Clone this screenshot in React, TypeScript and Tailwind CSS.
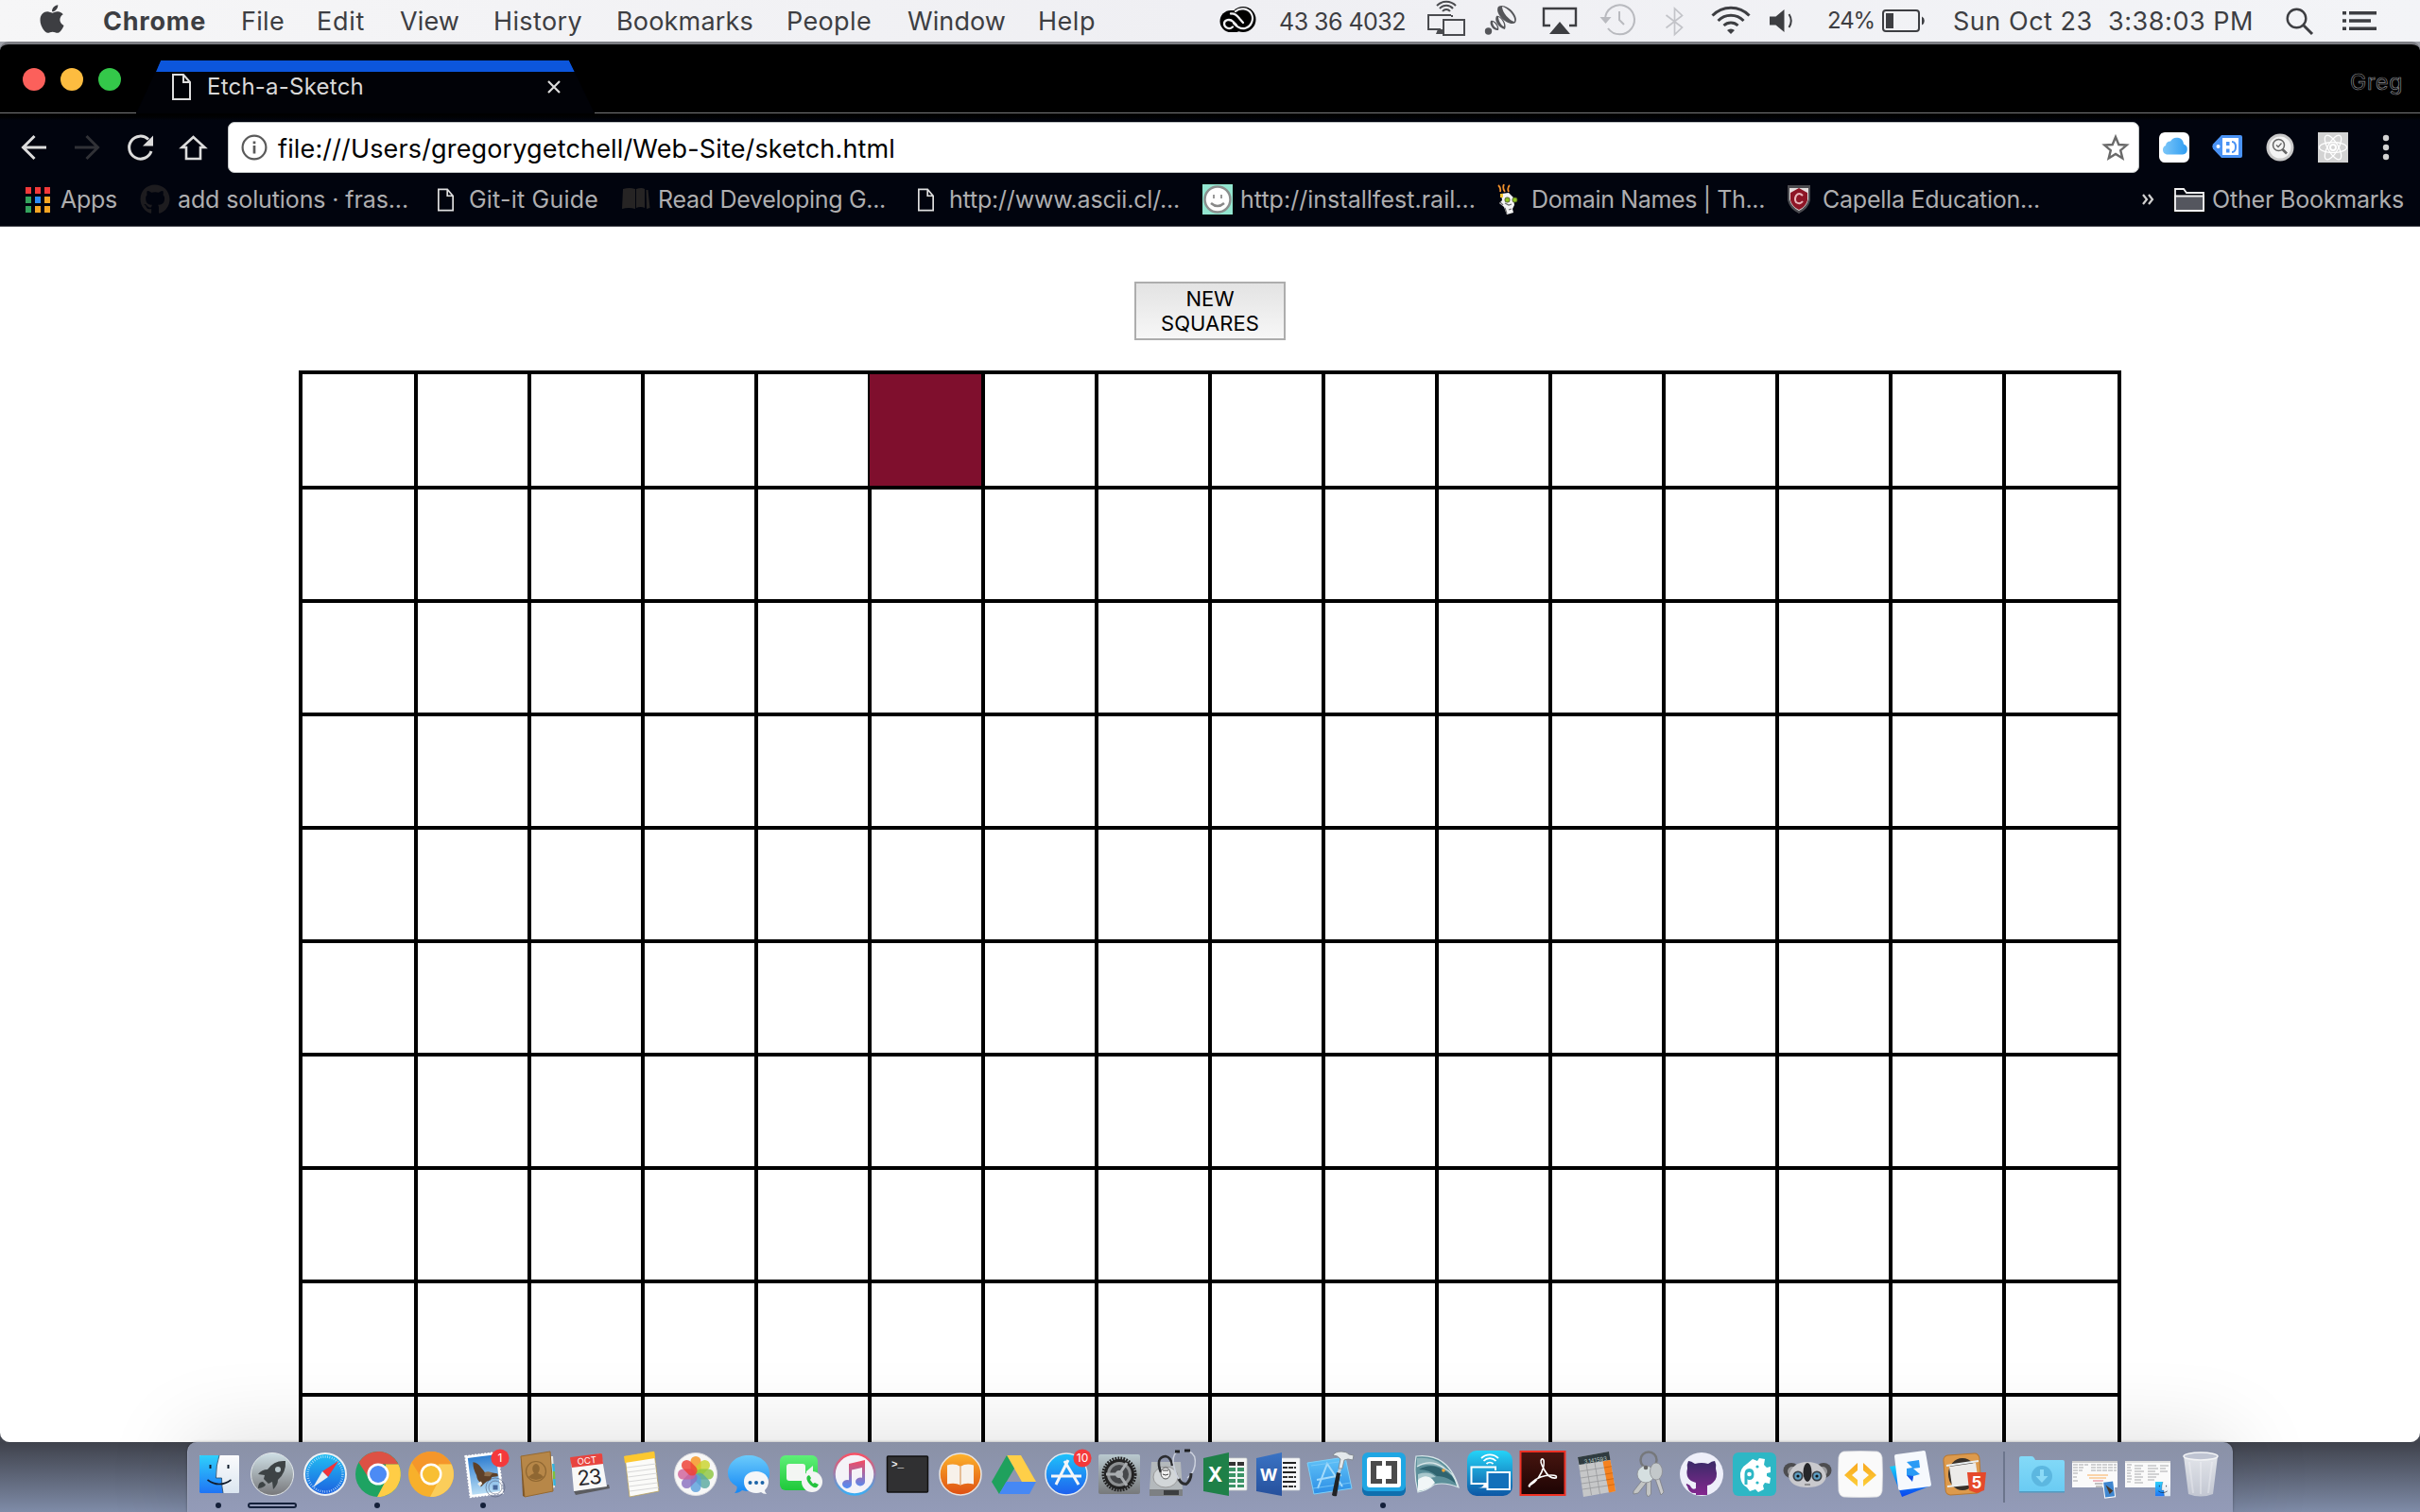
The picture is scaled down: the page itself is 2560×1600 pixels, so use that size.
import { useLayoutEffect, useRef, type ReactNode } from "react";
import { FaApple, FaGithub } from "react-icons/fa";

/** Single line of text whose letter spacing is tuned so it fills exactly `w` pixels. */
function Fit({ w, className = "", children }: { w: number; className?: string; children: string }) {
  const ref = useRef<HTMLSpanElement>(null);
  useLayoutEffect(() => {
    const el = ref.current;
    if (!el) return;
    el.style.letterSpacing = "0px";
    const natural = el.getBoundingClientRect().width;
    el.style.letterSpacing = `${(w - natural) / children.length}px`;
  }, [w, children]);
  return (
    <span ref={ref} className={`inline-block whitespace-pre ${className}`}>
      {children}
    </span>
  );
}

/* ---------- menu bar ---------- */

const menus = [
  { label: "Chrome", w: 109, slot: "w-[147px] pl-[1px] font-bold" },
  { label: "File", w: 46, slot: "w-[80px]" },
  { label: "Edit", w: 51, slot: "w-[88px]" },
  { label: "View", w: 63, slot: "w-[99px]" },
  { label: "History", w: 94, slot: "w-[130px]" },
  { label: "Bookmarks", w: 145, slot: "w-[180px]" },
  { label: "People", w: 90, slot: "w-[128px]" },
  { label: "Window", w: 104, slot: "w-[138px]" },
  { label: "Help", w: 61, slot: "w-[100px]" },
];

function MenuBar() {
  return (
    <div className="flex h-[44px] shrink-0 items-center bg-gradient-to-r from-[#f6f6f7] via-[#efeff3] to-[#f3f4f7] text-[27px] leading-none text-[#3d3e42]">
      <div className="flex w-[108px] shrink-0 pl-[40px] pb-[4px]">
        <FaApple className="h-[34px] w-[30px]" />
      </div>
      {menus.map((m) => (
        <div key={m.label} className={`shrink-0 ${m.slot}`}>
          <Fit w={m.w}>{m.label}</Fit>
        </div>
      ))}
      <div className="w-[91px] shrink-0" />
      <svg className="h-[44px] w-[64px] shrink-0" viewBox="0 0 64 44">
        <rect x="1.500" y="11" width="27" height="23" rx="11.500" fill="#000" />
        <circle cx="26" cy="20.500" r="13.500" fill="#000" />
        <g fill="none" stroke="#f1f1f4" strokeLinecap="round">
          <path d="M19 26.500 L15.500 23 C12 19.500 6 21 6 25 C6 29 11 32 15 28.500" strokeWidth="2.300" />
          <path d="M13 14.500 C18 14 20 17 22.500 20 L26 24" strokeWidth="2.300" />
          <path d="M18 12 C23 7.500 31 9 34.500 14 C38 20 35 28 28 30 C23 31 19.500 28.500 16 24.500" strokeWidth="2.200" />
        </g>
      </svg>
      <div className="w-[155px] shrink-0 pt-[2px] text-[25px]">
        <Fit w={134}>43 36 4032</Fit>
      </div>
      <svg className="h-[44px] w-[290px] shrink-0" viewBox="1508 0 290 44" fill="none" stroke="#4a4b4f" strokeWidth="2">
        <path d="M1535 16H1511V31H1524" />
        <path d="M1519 36h7v-5h-5z" fill="#4a4b4f" stroke="none" />
        <path d="M1536 18V16" />
        <rect x="1527" y="21" width="22" height="16" />
        <path d="M1526 11a5 5 0 0 1 8 0M1523 8a9 9 0 0 1 14 0M1520 5a14 14 0 0 1 20 0" transform="translate(0 1)" />
        <g fill="#55565a" stroke="none">
          <circle cx="1574.500" cy="33" r="3.700" />
          <path fillRule="evenodd" d="M1577 22c3-2 10 5 8 10c-5 1-10-6-8-10zm2 1c0 4 3 7 5 7c0-3-3-6-5-7z" />
          <path fillRule="evenodd" d="M1583 17c4-2 12 8 9 14c-6-1-12-9-9-14zm2 1c0 4 4 10 6 10c1-3-3-9-6-10z" />
          <path fillRule="evenodd" d="M1585 7c8-5 23 10 18 17c-6 5-23-9-18-17zm4 0c0 6 8 15 13 16c2-5-7-15-13-16z" />
        </g>
        <path d="M1640 27h-7V9h34v18h-7" strokeWidth="2.400" stroke="#3d3e42" />
        <path d="M1639 36h22l-11-13z" fill="#3d3e42" stroke="none" />
        <g stroke="#b9babf" strokeWidth="2">
          <path d="M1698 20a15.500 15.500 0 1 1 3 10" />
          <path d="M1713 12v9l5 5" />
          <path d="M1692.500 18h12l-6 7z" fill="#b9babf" stroke="none" />
        </g>
        <path d="M1762.500 16l17 13-8 7.500V9l8 7.500-17 13" stroke="#c3c4c9" strokeWidth="1.700" />
      </svg>
      <svg className="h-[44px] w-[134px] shrink-0" viewBox="1798 0 134 44" fill="none" stroke="#3d3e42">
        <path d="M1811.500 16.500a27 27 0 0 1 39 0M1817.500 22a19 19 0 0 1 27 0M1823.500 27a11 11 0 0 1 15 0" strokeWidth="3" />
        <path d="M1831 36l-4-4a6 6 0 0 1 8 0z" fill="#3d3e42" stroke="none" />
        <path d="M1872 17.500h6.500l9-7.500v24l-9-7.500H1872z" fill="#3d3e42" stroke="none" />
        <path d="M1892.500 15q4.500 7 0 14" strokeWidth="2" />
      </svg>
      <div className="w-[58px] shrink-0 pl-px text-[24px]">
        <Fit w={50}>24%</Fit>
      </div>
      <svg className="h-[44px] w-[74px] shrink-0" viewBox="1990 0 74 44">
        <rect x="1992" y="11" width="38" height="22" rx="3" fill="none" stroke="#3d3e42" strokeWidth="2" />
        <rect x="1995" y="14" width="8" height="16" fill="#3d3e42" />
        <path d="M2033 17.500a5 5 0 0 1 0 9z" fill="#3d3e42" />
      </svg>
      <div className="w-[352px] shrink-0 pl-[2px]">
        <Fit w={318}>{"Sun Oct 23  3:38:03 PM"}</Fit>
      </div>
      <svg className="h-[44px] w-[144px] shrink-0" viewBox="2416 0 144 44" fill="none" stroke="#3d3e42">
        <circle cx="2429.500" cy="19.500" r="9.800" strokeWidth="2.400" />
        <path d="M2436.500 26.500l9.500 9.500" strokeWidth="3" />
        <path d="M2478 13.700h4M2485 13.700h29M2478 22h4M2485 22h23M2478 30.300h4M2485 30.300h29" strokeWidth="3.500" />
      </svg>
    </div>
  );
}

/* ---------- browser chrome ---------- */

function DocIcon({ className }: { className: string }) {
  return (
    <svg className={className} viewBox="0 0 20 28" fill="none" stroke="#dedede" strokeWidth="2">
      <path d="M1 1h11l7 8v18H1zM12 1v8h7" />
    </svg>
  );
}

function TabStrip() {
  return (
    <div className="flex h-[73px] shrink-0 items-end">
      <div className="flex h-full w-[144px] shrink-0 items-center gap-[16px] border-b border-[#77787a] pl-[24px] pt-[2px]">
        <div className="size-[24px] rounded-full bg-[#fc605b]" />
        <div className="size-[24px] rounded-full bg-[#fdbc40]" />
        <div className="size-[24px] rounded-full bg-[#34c84a]" />
      </div>
      <div className="h-[56px] w-[485px] shrink-0 bg-[#010207] [clip-path:polygon(26px_0,458px_0,485px_100%,0_100%)]">
        <div className="h-[12px] bg-[#0c56dc] [clip-path:polygon(26px_0,458px_0,464px_100%,21px_100%)]" />
        <div className="flex h-[32px] items-center pl-[38px]">
          <DocIcon className="h-[28px] w-[20px]" />
          <div className="ml-[17px] w-[360px] pb-px text-[24px] leading-none text-[#d9d9d9]">
            <Fit w={166}>Etch-a-Sketch</Fit>
          </div>
          <svg className="size-[14px]" viewBox="0 0 14 14" stroke="#dcdcdc" strokeWidth="2.200">
            <path d="M1 1l12 12M13 1L1 13" />
          </svg>
        </div>
      </div>
      <div className="flex h-full flex-1 items-center justify-end border-b border-[#77787a] pr-[18px] pt-[8px]">
        <span className="text-[23px] leading-none text-black [-webkit-text-stroke:0.7px_#8a8b90]">
          <Fit w={56}>Greg</Fit>
        </span>
      </div>
    </div>
  );
}

function Toolbar() {
  return (
    <div className="flex h-[72px] shrink-0 items-center">
      <svg className="h-[72px] w-[241px] shrink-0" viewBox="0 120 241 72" fill="none" stroke="#dcdcdc" strokeWidth="3">
        <path d="M49 156H25M36.500 144L24.500 156l12 12" />
        <path d="M79 156h24M91.500 144l12 12-12 12" stroke="#303136" />
        <path d="M157 147.500A12 12 0 1 0 160 160" />
        <path d="M162 143.500v11h-11z" fill="#dcdcdc" stroke="none" />
        <path d="M197 156v12h15v-12h4.500L204.500 145 192.500 156z" strokeWidth="2.600" />
      </svg>
      <div className="flex h-[54px] w-[2022px] shrink-0 items-center rounded-[7px] border border-[#bfc4c4] bg-white pl-[13px]">
        <svg className="size-[28px] shrink-0" viewBox="0 0 28 28" fill="none" stroke="#5a5a5a" strokeWidth="2.200">
          <circle cx="14" cy="14" r="12.400" />
          <path d="M14 12v8.500M14 7.500v2.700" strokeWidth="2.700" />
        </svg>
        <div className="ml-[11px] flex-1 pt-[2px] text-[27px] leading-none text-black">
          <Fit w={653}>file:///Users/gregorygetchell/Web-Site/sketch.html</Fit>
        </div>
        <svg className="mr-[9px] size-[30px] shrink-0" viewBox="0 0 30 30" fill="none" stroke="#6a6a6a" strokeWidth="2.400">
          <path d="M15 4l3.300 8 8.400.6-6.500 5.500 2.100 8.400L15 22l-7.300 4.500 2.100-8.400-6.500-5.500 8.400-.6z" />
        </svg>
      </div>
      <svg className="h-[72px] w-[297px] shrink-0" viewBox="2263 120 297 72" fill="none">
        <defs>
          <linearGradient id="cloud" x1="0" y1="0" x2="1" y2="0">
            <stop offset="0" stopColor="#7cc6f8" />
            <stop offset="1" stopColor="#2f9df2" />
          </linearGradient>
        </defs>
        <rect x="2284" y="140" width="32" height="32" rx="6" fill="#fff" />
        <path d="M2292 163.500a5 5 0 0 1-1-9.500a5 5 0 0 1 5-4.500a7.500 7.500 0 0 1 14 3a5.700 5.700 0 0 1-1 11z" fill="url(#cloud)" />
        <path d="M2350 143h20q2 0 2 2v20q0 2-2 2h-20l-9-9.500q-1.500-2.500 0-5z" fill="#4a93f5" />
        <circle cx="2346.500" cy="155" r="2" fill="#fff" />
        <rect x="2351" y="146" width="17" height="18" fill="#fff" />
        <path d="M2355 150h3.500v4h-3.500zM2355 157.500h3.500v4h-3.500z" fill="#4a93f5" />
        <path d="M2361 150q4 0 4 5.500t-4 5.500" stroke="#4a93f5" strokeWidth="2" />
        <circle cx="2412" cy="156" r="14.500" fill="#c9c9c9" />
        <circle cx="2412" cy="156" r="11.500" fill="#f4f4f4" />
        <circle cx="2410.500" cy="153.500" r="6" stroke="#666" strokeWidth="1.500" />
        <path d="M2414.500 158l4.500 4.500" stroke="#666" strokeWidth="2.700" />
        <path d="M2408 153.500l2 2 3.500-4" stroke="#666" strokeWidth="1.200" />
        <rect x="2452" y="140" width="32" height="32" fill="#d3d3d3" />
        <g stroke="#fff" strokeWidth="1.300">
          <ellipse cx="2468" cy="156" rx="14.500" ry="5.500" />
          <ellipse cx="2468" cy="156" rx="14.500" ry="5.500" transform="rotate(60 2468 156)" />
          <ellipse cx="2468" cy="156" rx="14.500" ry="5.500" transform="rotate(120 2468 156)" />
          <circle cx="2468" cy="156" r="3" fill="#d3d3d3" strokeWidth="2" />
        </g>
        <g fill="#d2d2d2">
          <circle cx="2524" cy="146" r="3.200" />
          <circle cx="2524" cy="156" r="3.200" />
          <circle cx="2524" cy="166" r="3.200" />
        </g>
      </svg>
    </div>
  );
}

function AppsIcon() {
  return (
    <div className="grid grid-cols-[6px_6px_6px] grid-rows-[7px_7px_7px] gap-x-[4px] gap-y-[3px]">
      <i className="bg-[#f2393a]" /><i className="bg-[#f2393a]" /><i className="bg-[#f2393a]" />
      <i className="bg-[#34a35d]" /><i className="bg-[#2c8cf4]" /><i className="bg-[#f5a623]" />
      <i className="bg-[#34a35d]" /><i className="bg-[#f5a623]" /><i className="bg-[#f5a623]" />
    </div>
  );
}

function BookIcon() {
  return (
    <svg className="h-[24px] w-[32px]" viewBox="0 0 32 24" fill="#262424">
      <path d="M3 1q7-2 13 0v21q-7-2-14 0zM17 1q6-2 9 0v20q-4-2-9 0zM27.500 2h2l2 19-3.500 1z" />
    </svg>
  );
}

function SmileyIcon() {
  return (
    <svg className="size-[32px]" viewBox="0 0 32 32">
      <rect width="32" height="32" fill="#93e6d0" />
      <circle cx="16" cy="16" r="13.500" fill="#fff" stroke="#8b8f8e" strokeWidth="2.500" />
      <path d="M12 11v4M20 11v4" stroke="#999" strokeWidth="2" />
      <path d="M9 20q7 6 14 0" fill="none" stroke="#888" strokeWidth="2.500" />
    </svg>
  );
}

function MascotIcon() {
  return (
    <svg className="h-[32px] w-[22px]" viewBox="0 0 22 32" fill="none">
      <path d="M3 8Q4 4 1 1M8 8Q5 4 7 0M12 8Q10 4 13 1" stroke="#f0902c" strokeWidth="1.800" />
      <path d="M4 10l8-1 5 5 1 8-2 4 1 4-7 2-3-8-5-4 3-3z" fill="#f3f3f3" />
      <path d="M3 19l3 3M8 20l4 2 3-1M8 25l2 6M12 27l3-1" stroke="#666" strokeWidth="1.200" />
      <rect x="8" y="14" width="5" height="5" rx="2" fill="#8fc31f" stroke="#3f4a20" strokeWidth=".8" />
      <rect x="16" y="14" width="5" height="5" rx="2" fill="#8fc31f" stroke="#3f4a20" strokeWidth=".8" />
      <rect x="3" y="10" width="3" height="4" fill="#f0c22c" />
    </svg>
  );
}

function ShieldIcon() {
  return (
    <svg className="h-[32px] w-[26px]" viewBox="0 0 26 32">
      <path d="M1 1h24v16q-2 9-12 14Q3 26 1 17z" fill="#4b4b50" />
      <path d="M3 4h20v12q-2 8-10 12Q5 24 3 16z" fill="#e4dede" />
      <path d="M4 9l9-5 9 5v8q-2 7-9 10-7-3-9-10z" fill="#8e1526" />
      <path d="M17 12q-4-4-7 0-2 4 0 7 4 3 7-1" fill="none" stroke="#e9b7bc" strokeWidth="2" />
    </svg>
  );
}

const bookmarks: { label: string; w: number; icon: ReactNode; lead: string; slot: string }[] = [
  { label: "Apps", w: 60, icon: <AppsIcon />, lead: "w-[64px] pl-[27px]", slot: "w-[148px]" },
  { label: "add solutions · fras...", w: 244, icon: <FaGithub className="size-[32px] text-[#1d1c1f]" />, lead: "w-[40px]", slot: "w-[315px]" },
  { label: "Git-it Guide", w: 137, icon: <DocIcon className="h-[25px] w-[17px]" />, lead: "w-[33px]", slot: "w-[193px]" },
  { label: "Read Developing G...", w: 241, icon: <BookIcon />, lead: "w-[40px]", slot: "w-[315px]" },
  { label: "http://www.ascii.cl/...", w: 244, icon: <DocIcon className="h-[25px] w-[17px]" />, lead: "w-[33px]", slot: "w-[301px]" },
  { label: "http://installfest.rail...", w: 249, icon: <SmileyIcon />, lead: "w-[40px]", slot: "w-[312px]" },
  { label: "Domain Names | Th...", w: 247, icon: <MascotIcon />, lead: "w-[36px]", slot: "w-[306px]" },
  { label: "Capella Education...", w: 230, icon: <ShieldIcon />, lead: "w-[38px]", slot: "w-[376px]" },
];

function BookmarksBar() {
  return (
    <div className="flex h-[48px] shrink-0 items-center border-b border-[#4a4b52] pb-[9px] text-[25px] leading-none text-[#aeaeb0]">
      {bookmarks.map((b) => (
        <div key={b.label} className={`flex shrink-0 items-center ${b.slot}`}>
          <div className={`shrink-0 ${b.lead}`}>{b.icon}</div>
          <Fit w={b.w}>{b.label}</Fit>
        </div>
      ))}
      <svg className="h-[12px] w-[34px] shrink-0" viewBox="0 0 34 12" fill="none" stroke="#d0d0d0" strokeWidth="2.200">
        <path d="M1 1l4 5-4 5M7 1l4 5-4 5" />
      </svg>
      <svg className="h-[25px] w-[40px] shrink-0" viewBox="0 0 40 25" stroke="#f2f2f2" strokeWidth="1.800">
        <path d="M1 23V1h9l3 4h18v18q0 1-1 1H2q-1 0-1-1z" fill="#05070f" />
        <path d="M1 8.500h30V24H1z" fill="#54565e" />
      </svg>
      <Fit w={203}>Other Bookmarks</Fit>
    </div>
  );
}

/* ---------- page ---------- */

function Board() {
  return (
    <div className="grid w-[1928px] grid-cols-[122px_repeat(14,120px)_122px] grid-rows-[122px_repeat(9,120px)] border-l-4 border-t-4 border-black">
      {Array.from({ length: 160 }, (_, i) =>
        i === 5 ? (
          <div key={i} className="-ml-[2px] border-b-4 border-r-4 border-black bg-[#7f0f2d]" />
        ) : (
          <div key={i} className="border-b-4 border-r-4 border-black" />
        ),
      )}
    </div>
  );
}

function Page() {
  return (
    <div className="flex h-[1286px] flex-col items-center overflow-hidden rounded-b-[10px] bg-white pt-[58px]">
      <button className="mb-[32px] flex h-[62px] w-[160px] shrink-0 flex-col items-center justify-center border-2 border-[#adadad] bg-gradient-to-b from-[#e3e3e3] to-[#f7f7f7] text-[22px] leading-[26px] text-black">
        <Fit w={51}>NEW</Fit>
        <Fit w={104}>SQUARES</Fit>
      </button>
      <Board />
    </div>
  );
}

/* ---------- dock ---------- */

function Ico({ children }: { children: ReactNode }) {
  return (
    <svg className="size-[56px] overflow-visible" viewBox="0 0 56 56" fill="none" fontFamily="Inter, sans-serif">
      {children}
    </svg>
  );
}

function Grads() {
  const g: [string, string, string][] = [
    ["gFinder", "#2fd0fb", "#1f74f5"], ["gWhite", "#fbfbfd", "#dbe6f0"], ["gRocket", "#cfe0e6", "#77777a"],
    ["gSafari", "#22c0f2", "#1c5fe0"], ["gMail", "#2f7ed0", "#b8ddf5"], ["gMsg", "#6bcbfb", "#1487f5"],
    ["gFace", "#5ef078", "#1fc83a"], ["gTunes", "#fb5064", "#39aef5"], ["gNote", "#f5495f", "#4f8df7"],
    ["gBooks", "#fdb32c", "#de4f12"], ["gStore", "#1fc3fa", "#1e5fee"], ["gPref", "#b9c9cf", "#77797b"],
    ["gX", "#62c4f8", "#2c8ee6"], ["gScreens", "#25d3f7", "#0d57a5"], ["gAcro", "#47150f", "#1d0404"],
    ["gGit", "#3a2a68", "#84288f"], ["gCode", "#f9a71d", "#fccf3b"], ["gFolder", "#84daf8", "#6acbf3"],
    ["gFr", "#17e0fb", "#0a43f0"], ["gWord", "#3a73c4", "#26509c"], ["gTrash", "#e8eaee", "#c6cad4"],
  ];
  return (
    <svg className="absolute size-0">
      <defs>
        {g.map(([id, a, b]) => (
          <linearGradient key={id} id={id} x1="0" y1="0" x2="0" y2="1">
            <stop offset="0" stopColor={a} />
            <stop offset="1" stopColor={b} />
          </linearGradient>
        ))}
      </defs>
    </svg>
  );
}

function FinderArt() {
  return (
    <>
      <rect x="7" y="8" width="42" height="40" rx="1" fill="url(#gWhite)" />
      <path d="M28 8H8q-1 0-1 1v38q0 1 1 1h24q-1.500-7-1.500-16H24.500Q24.500 18 28 8z" fill="url(#gFinder)" />
      <path d="M28 8q-3.500 10-3.500 24h6q0 9 1.500 16" stroke="#27455f" strokeWidth=".8" />
      <path d="M18.500 18v4M37.500 18v4" stroke="#111c2c" strokeWidth="2" />
      <path d="M15.500 34q12.500 9 25 0" stroke="#111c2c" strokeWidth="1.600" />
    </>
  );
}

function ChromeArt({ a, b, c, mid }: { a: string; b: string; c: string; mid: string }) {
  return (
    <>
      <circle cx="28" cy="28" r="24" fill={b} />
      <path d="M7.500 15.500A24 24 0 0 1 49.500 17.500H28L18 32z" fill={a} />
      <path d="M49.500 17.500A24 24 0 0 1 27 52L37 33 36 17.500z" fill={c} />
      <circle cx="28" cy="28" r="11.500" fill="#fff" />
      <circle cx="28" cy="28" r="9" fill={mid} />
    </>
  );
}

function Badge({ n, x, y }: { n: string; x: number; y: number }) {
  return (
    <>
      <circle cx={x} cy={y} r="9.600" fill="#f5393b" />
      <text x={x} y={y + 4.300} textAnchor="middle" fontSize="12" fill="#fff">{n}</text>
    </>
  );
}

function ScreensArt() {
  return (
    <>
      <path d="M31 38H8.500V20.500H34V24" stroke="#fff" strokeWidth="2" />
      <path d="M15 42.500q6 0 7-4.500h5v4.500z" fill="#fff" />
      <rect x="25.500" y="26" width="23.500" height="18" fill="#1270ba" stroke="#fff" strokeWidth="2" />
      <path d="M24.500 17a5 5 0 0 1 7 0M21.500 14a9 9 0 0 1 13 0M19 11a13 13 0 0 1 18 0" stroke="#fff" strokeWidth="1.800" />
    </>
  );
}

const petals = ["#f7931e", "#c9d32c", "#8cc63f", "#5aa9a0", "#5aa0dc", "#8a6fc0", "#d0609a", "#ee4035"];

const dockIcons: ReactNode[] = [
  <FinderArt />,
  <>
    <circle cx="28" cy="28" r="22.500" fill="url(#gRocket)" stroke="#e3e8ea" strokeWidth="1" />
    <path d="M42 14q-12-1-19 9-6 0-10 5l7 1-1 4 5 5 4-2 1 8q5-5 5-10 9-8 8-20z" fill="#3d4345" />
    <path d="M18 36q-5 0-5 7 7-1 8-4z" fill="#3d4345" />
    <circle cx="34" cy="23" r="3" fill="#b9c8cd" />
  </>,
  <>
    <circle cx="28" cy="28" r="22" fill="url(#gSafari)" stroke="#eef2f5" strokeWidth="2" />
    <circle cx="28" cy="28" r="18.500" stroke="#d6ecfb" strokeWidth="2.500" strokeDasharray=".8 1.600" opacity=".8" />
    <path d="M42 14L25 25l6 6z" fill="#f0323a" />
    <path d="M15 42L25 25l6 6z" fill="#e9edf0" />
  </>,
  <ChromeArt a="#dd5144" b="#1ea362" c="#ffcd46" mid="#4c8bf5" />,
  <ChromeArt a="#f5962a" b="#f7b02b" c="#fbcd5a" mid="#f8bf33" />,
  <>
    <g transform="rotate(-7 28 28)">
      <rect x="10.500" y="6.500" width="35" height="44" fill="#fff" stroke="#fff" strokeWidth="1.500" strokeDasharray="2 1.400" />
      <rect x="13" y="9" width="30" height="39" fill="url(#gMail)" />
      <path d="M18 14q5 1 8 7 2 3 3 5l6 1 7 2q1 2 0 3l-6 0-2 3-4 1-3 2-4 3 0-5q-3-2-3-8-3-7-2-14z" fill="#5d4028" />
      <path d="M29 26q5-1 8 2l-3 3-6-1z" fill="#8a6b4a" />
      <path d="M20 37l4-2 1 3-3 2z" fill="#f0ece4" />
    </g>
    <g stroke="#56607a" opacity=".6">
      <circle cx="40" cy="42" r="10" strokeWidth="1" />
      <circle cx="40" cy="42" r="7" strokeWidth="1" />
    </g>
    <rect x="37.500" y="39.500" width="5" height="5" fill="#2f4f86" opacity=".8" />
    <Badge n="1" x={45} y={11} />
  </>,
  <>
    <path d="M42 9l3 0 2 33-3 1z" fill="#e9e9e4" />
    <path d="M44 17h2.500l.6 8h-2.500zM45 33h2.500l.4 7h-2.500z" fill="#35b5dd" />
    <path d="M44.500 25H47l.4 8H45z" fill="#7bc13c" />
    <path d="M11 9l31-5 3 42-30 6z" fill="#b78748" stroke="#96692f" strokeWidth="1" />
    <path d="M11 9l4 43-2-1z" fill="#7e5627" />
    <circle cx="27" cy="25" r="10.500" stroke="#8f6732" strokeWidth="1.200" />
    <path d="M19 31q3-3 6-4-3-4-1-8 3-4 6 0 2 4-1 8 4 1 6 4-8 6-16 0z" fill="#8f6732" />
  </>,
  <>
    <path d="M11 46l37-7 1 4-36 7z" fill="#5b5c60" />
    <path d="M8 12l32-6 6 35-35 5z" fill="#f8f8f8" />
    <path d="M7 11q0-1 1-1l31-4q2 0 2 1l1 10-33 4z" fill="#e8443f" />
    <text x="25" y="17" transform="rotate(-6 25 15)" textAnchor="middle" fontSize="9.500" fill="#fff">OCT</text>
    <text x="27" y="39" transform="rotate(-6 27 30)" textAnchor="middle" fontSize="22" letterSpacing="-1" fill="#26262a">23</text>
  </>,
  <>
    <path d="M9 9l31-5 5 42-31 6z" fill="#fbfbf9" stroke="#b9a25c" strokeWidth=".8" />
    <path d="M8 9l32-5 1 7-32 5z" fill="#fdc82f" />
    <path d="M11 21l31-4M11 26l31-4M12 31l31-4M12 36l31-4M13 41l31-4M14 46l31-4" stroke="#d8d8d8" strokeWidth="1" />
  </>,
  <>
    <circle cx="28" cy="28" r="22.500" fill="#f7f7f7" stroke="#dcdce0" strokeWidth="1" />
    {petals.map((p, i) => (
      <rect key={p} x="22.500" y="9" width="11" height="19" rx="5.500" fill={p} opacity=".82" transform={`rotate(${i * 45} 28 28)`} />
    ))}
  </>,
  <>
    <path d="M28 8c13 0 22 8 22 19S41 46 28 46q-4 0-7-1-3 3-8 3 3-3 2.500-7Q6 36 6 27C6 16 15 8 28 8z" fill="url(#gMsg)" />
    <path d="M36 25c8 0 13 5 13 11q0 5-4 9 0 2 2 4-4 0-6-2-2 1-5 1c-8 0-13-5-13-12s5-11 13-11z" fill="#f5f6f8" />
    <g fill="#1c64a8"><circle cx="29.500" cy="37" r="2" /><circle cx="36" cy="37" r="2" /><circle cx="42.500" cy="37" r="2" /></g>
  </>,
  <>
    <rect x="5" y="8" width="40" height="37" rx="6" fill="url(#gFace)" />
    <rect x="12" y="17" width="20" height="18" rx="3" fill="#f3f6f3" />
    <path d="M33 25l7-6v14h-7z" fill="#f3f6f3" />
    <circle cx="39" cy="36" r="11" fill="#f4f5f4" />
    <path d="M34 30q-2 3 2 8t8 4l2-3-4-2-2 1-3-4 1-2-2-3z" fill="#25c33e" />
  </>,
  <>
    <circle cx="28" cy="28" r="21.500" fill="#f4f3f8" stroke="url(#gTunes)" strokeWidth="2.500" />
    <path d="M22 17l17-4v22.500a5 4.500 0 1 1-3-3.700V21l-11 2.500V38a5 4.500 0 1 1-3-3.700z" fill="url(#gNote)" />
  </>,
  <>
    <rect x="6.500" y="9" width="43" height="38" rx="1" fill="#303032" stroke="#111" strokeWidth="1.500" />
    <text x="11" y="21" fontFamily="Liberation Mono, monospace" fontSize="11" fontWeight="bold" fill="#eee">{">_"}</text>
  </>,
  <>
    <circle cx="28" cy="28" r="22" fill="url(#gBooks)" stroke="#e9e4e0" strokeWidth="1.500" />
    <path d="M28 20q-6-4-14-1.500v20q8-2 14 1 6-3 14-1v-20Q34 16 28 20z" fill="#f7f1ea" />
    <path d="M28 20v19.500" stroke="#d99a5c" strokeWidth="1.200" />
  </>,
  <>
    <path d="M21 8h15l16 28H37z" fill="#ffcf48" />
    <path d="M21 8l8 14L13 49 5 36z" fill="#1fa15d" />
    <path d="M20.500 36H52l-7 13H13z" fill="#4688f4" />
  </>,
  <>
    <circle cx="28" cy="28" r="22" fill="url(#gStore)" stroke="#e4eaf0" strokeWidth="1.500" />
    <path d="M30 13L17 39M26 14l15 25M12 30h32" stroke="#f4f6f8" strokeWidth="3" />
    <Badge n="10" x={45} y={11} />
  </>,
  <>
    <rect x="6" y="7" width="44" height="42" rx="2" fill="url(#gPref)" />
    <circle cx="28" cy="28" r="17" stroke="#222" strokeWidth="3" strokeDasharray="1.800 1.200" />
    <circle cx="28" cy="28" r="14.500" fill="#8d9092" stroke="#222" strokeWidth="3" />
    <circle cx="28" cy="28" r="10" fill="#45474a" />
    <path d="M28 28H14M28 28l8-12M28 28l8 12" stroke="#a9adb0" strokeWidth="3" />
    <circle cx="28" cy="28" r="4" fill="#a9adb0" />
  </>,
  <>
    <path d="M6 15h31l2 30H4z" fill="#b4b9bc" />
    <rect x="4" y="44" width="35" height="7" fill="#7d8083" />
    <path d="M19 45h16v5H19z" fill="#3c3e40" />
    <ellipse cx="21" cy="31" rx="13" ry="11" fill="#d2d6d8" stroke="#999" strokeWidth="1" />
    <path d="M16 26Q10 10 21 9q6 1 7 10" stroke="#2b2c2f" strokeWidth="2.600" />
    <path d="M33 4q-6 6-3 16 2 10 6 14M46 4q8 3 6 15-2 9-8 13" stroke="#cdd2de" strokeWidth="1.500" />
    <path d="M31 4h5M41 3h6" stroke="#1d1e20" strokeWidth="3" />
    <path d="M35 33q3 6 7 5M48 27q0 8-6 12" stroke="#2b2c2f" strokeWidth="3" />
    <ellipse cx="21" cy="27" rx="5" ry="6" fill="#f0f0f0" stroke="#555" strokeWidth="1" />
    <path d="M18 24h6M18 28q3 2 6 0" stroke="#444" strokeWidth="1" />
  </>,
  <>
    <path d="M28 11h22q1 0 1 1v32q0 1-1 1H28z" fill="#f5f6f5" stroke="#cfd2cf" strokeWidth=".7" />
    <path d="M32 15h7v4h-7zM41 15h7v4h-7z" fill="#333" />
    <path d="M32 21h7v4h-7zM41 21h7v4h-7zM32 27h7v4h-7zM41 27h7v4h-7zM32 33h7v4h-7zM41 33h7v4h-7zM32 39h7v3h-7zM41 39h7v3h-7z" fill="#3b9366" />
    <path d="M5 11l27-6v46L5 46z" fill="#1e8048" />
    <text x="17.500" y="36" textAnchor="middle" fontSize="21" fontWeight="bold" fill="#fff">X</text>
  </>,
  <>
    <path d="M28 11h22q1 0 1 1v32q0 1-1 1H28z" fill="#f5f6f8" stroke="#cfd2d6" strokeWidth=".7" />
    <path d="M33 16h14M33 26h14M33 36h14" stroke="#222" strokeWidth="1.800" />
    <path d="M33 21h14M33 31h14M33 41h14" stroke="#333" strokeWidth="1.800" strokeDasharray="5 1" />
    <path d="M5 11l27-6v46L5 46z" fill="url(#gWord)" />
    <text x="18" y="34.500" textAnchor="middle" fontSize="18" fontWeight="bold" fill="#fff">W</text>
  </>,
  <>
    <path d="M3 16l40-6 7 33-40 6z" fill="url(#gX)" stroke="#7cd0fa" strokeWidth="1" />
    <path d="M14 43l10-26 16 24M13 34l26-5" stroke="#a3dafa" strokeWidth="2" />
    <path d="M9 43l40-6M7 19l36-5" stroke="#7fcaf7" strokeWidth=".8" />
    <path d="M38 21l-3 9" stroke="#c9d0d5" strokeWidth="3" />
    <path d="M34 26l4 1-4 24q-3 1-5-1z" fill="#202225" />
    <path d="M36 22l2-10q-3-4-8-4 2-4 9-4 6 0 8 3l5 1-1 5-5-1-4 1-2 9z" fill="#e3e8eb" stroke="#7f868c" strokeWidth=".9" />
  </>,
  <>
    <rect x="5" y="7" width="46" height="44" rx="6" fill="#0f6fae" />
    <rect x="5" y="5" width="46" height="41" rx="6" fill="#1fa6e3" />
    <rect x="10" y="10" width="36" height="32" rx="3" fill="#fff" />
    <path d="M14 14h12v5h-6v14h6v5H14zM42 14H30v5h6v14h-6v5h12z" fill="#4b4b4b" />
  </>,
  <>
    <path d="M6 9q34-4 45 33-14-6-26-3-7 6-17 8Q3 28 6 9z" fill="#5c8f9a" stroke="#d8e6e9" strokeWidth="1.200" />
    <path d="M7 11q20-2 32 12-20-8-32-3z" fill="#8fb5bc" />
    <path d="M9 23q14-8 26 1 10 4 13 14-10-8-20-8-8-7-19-7z" fill="#2f6470" />
    <path d="M8 28q12-4 19 3-8 0-19 9z" fill="#a9c8cd" />
    <path d="M8 34q8-7 15-1l3 4q-7 8-18 9z" fill="#f1f6f7" />
    <path d="M7 20q15-9 29 2 10 4 14 19" stroke="#dbe8ea" strokeWidth="1.200" />
    <circle cx="35" cy="24" r="1.800" fill="#f2a53a" />
  </>,
  <>
    <rect x="4" y="3" width="48" height="48" rx="10" fill="url(#gScreens)" />
    <ScreensArt />
  </>,
  <>
    <rect x="4.500" y="4" width="47" height="46" fill="url(#gAcro)" stroke="#ee3124" strokeWidth="2" />
    <path d="M14 40q12-7 15-21 1-8-2-7-3 2 3 12 5 9 12 8 2-3-5-3-12 0-21 8-4 4-2 4z" stroke="#fff" strokeWidth="1.600" />
  </>,
  <>
    <path d="M9 10l33-6 7 42-34 6z" fill="#c6c7c8" />
    <path d="M9 10l33-6 1.500 9L10.500 18z" fill="#2f3b40" />
    <path d="M35.500 14.500l8-1.500 5.500 33-7 1.500z" fill="#f58220" />
    <text x="40" y="13.500" transform="rotate(-8 40 12)" textAnchor="end" fontSize="6" fill="#b9c9c4">3.141593</text>
    <path d="M18 17l5.500 33M27 16l5.500 33M11 25l26-4M12 32l27-4M13 38l27-4M14 44l27-4" stroke="#97989a" strokeWidth=".8" />
    <path d="M37 21l8-1.300M38 28l8-1.300M39 34l8-1.300M41 40l7-1.300" stroke="#c9630c" strokeWidth=".8" />
  </>,
  <>
    <circle cx="28" cy="13" r="8.500" stroke="#76787b" strokeWidth="2.500" />
    <path d="M23 32l-11 14 0 3 5-1 11-14z" fill="#c3c5c4" stroke="#77797c" strokeWidth=".7" />
    <path d="M34 30l7 20 3-3-6-19z" fill="#c9caca" stroke="#77797c" strokeWidth=".7" />
    <path d="M26 30h4.500v19l-3 3-2-3z" fill="#c3c5c4" stroke="#77797c" strokeWidth=".7" />
    <circle cx="25" cy="28" r="9" fill="#d5dfe0" stroke="#8b8d90" strokeWidth=".8" />
    <ellipse cx="36" cy="25" rx="6.500" ry="9" fill="#c3c8ca" stroke="#8b8d90" strokeWidth=".8" />
    <circle cx="25" cy="21" r="2.300" fill="#666" />
  </>,
  <>
    <circle cx="28" cy="28" r="23" fill="#eeeffa" />
    <path d="M14 14q3 0 7 3 7-2 14 0 4-3 7-3 2 4 1 8 3 10-3 15-3 3-6 3v10H22v-2q-7 1-9-7-2-2-1-3 4 1 5 4 2 3 5 1v-6q-12-3-9-15-1-4 1-8z" fill="url(#gGit)" />
  </>,
  <>
    <rect x="5" y="5" width="46" height="46" rx="6" fill="#2db7c5" />
    <path d="M20 17l6-5 5 2 2-3 6 1-1 6 3 3 4-1v6l-4 1v3l4 2-1 6-5-1-2 3 1 4-6 3-3-3-6 2-3-4q-6-3-7-11-1-9 7-14z" fill="#fff" />
    <path d="M17.500 39V28q0-6 5-6t5 6-5 6q-2 0-2-1v6z" fill="#2db7c5" />
    <circle cx="22.500" cy="28" r="2.300" fill="#fff" />
    <circle cx="31" cy="20" r="1.600" fill="#2db7c5" /><circle cx="31" cy="37" r="1.600" fill="#2db7c5" />
  </>,
  <>
    <ellipse cx="11" cy="24" rx="8.500" ry="8" fill="#4d4d50" />
    <ellipse cx="45" cy="24" rx="8.500" ry="8" fill="#4d4d50" />
    <ellipse cx="12" cy="25" rx="5" ry="5" fill="#9a9a9e" />
    <ellipse cx="44" cy="25" rx="5" ry="5" fill="#9a9a9e" />
    <path d="M28 15q16 0 20 15-2 12-20 12T8 30q4-15 20-15z" fill="#c9c9cd" />
    <circle cx="18" cy="30" r="5.500" fill="#3a4148" /><circle cx="38" cy="30" r="5.500" fill="#3a4148" />
    <circle cx="18" cy="30" r="3.700" fill="#5d9fc4" /><circle cx="38" cy="30" r="3.700" fill="#5d9fc4" />
    <circle cx="18" cy="30" r="1.600" fill="#111" /><circle cx="38" cy="30" r="1.600" fill="#111" />
    <ellipse cx="28" cy="26" rx="4.500" ry="10" fill="#252629" />
    <path d="M25 39h6" stroke="#555" strokeWidth="1" />
  </>,
  <>
    <path d="M10 4q18-1 36 0 4 1 5 6 1 18 0 36-1 5-5 6-18 1-36 0-4-1-5-6-1-18 0-36 1-5 5-6z" fill="#fafafa" stroke="#d9dade" strokeWidth=".8" />
    <path d="M25 16v8l-6 5 6 5v7L11 29zM31 16v8l6 5-6 5v7l14-12z" fill="url(#gCode)" />
  </>,
  <>
    <path d="M3 20l30-5 14 25-31 12z" fill="url(#gFr)" />
    <path d="M10 7l29-4q2 0 2 2l6 34q0 2-2 2l-31 4q-2 0-2-2L8 9q0-2 2-2z" fill="#f6f9fd" />
    <path d="M21 15l13-2 1 8-7 1 7 6-7 2-1 5-6-6 0-7 6-1z" fill="#2a9bf5" />
    <path d="M21 29l7 1-1 6z" fill="#1553e6" />
  </>,
  <>
    <rect x="5" y="7" width="38" height="42" rx="5" fill="#dd9a4c" stroke="#b97830" strokeWidth="1" transform="rotate(-4 24 28)" />
    <ellipse cx="24" cy="28" rx="15" ry="17" fill="#38312a" />
    <path d="M10 20l28-4 3 21-28 4z" fill="#ecebe9" />
    <path d="M7 19l34-5M8 41l31-3" stroke="#e9eef0" strokeWidth="2" />
    <path d="M29 26h20l-2 19-8 3-8-3z" fill="#e5492b" />
    <text x="39" y="43" textAnchor="middle" fontSize="17" fontWeight="bold" fill="#fff">5</text>
  </>,
];

const trayIcons: ReactNode[] = [
  <>
    <path d="M4 46V11q0-2 2-2h11q2 0 3 2l1 2h29q2 0 2 2v31z" fill="url(#gFolder)" />
    <path d="M4 46h48v1.500H4z" fill="#4f9cc4" />
    <circle cx="28" cy="30" r="11" fill="#5cb7e0" />
    <path d="M26 23h4v7h4.500L28 37l-6.500-7H26z" fill="#8adaf7" />
  </>,
  <>
    <rect x="4" y="14" width="48" height="28" fill="#fafafa" />
    <path d="M4 14h48v2H4z" fill="#ccc" />
    <path d="M5 18h16M24 18h27M5 21h12M24 21h27M24 24h27M5 24h10M5 27h5M5 31h4M5 35h5" stroke="#a7a8ab" strokeWidth="1" strokeDasharray="5 1" />
    <path d="M20 29h22M22 32h18" stroke="#fac890" strokeWidth="1.600" />
    <path d="M26 35h11" stroke="#e58b9b" strokeWidth="1.200" />
    <path d="M28 38h9M29 41h7" stroke="#888" strokeWidth="1.200" />
    <g transform="translate(37 35) rotate(-7 6 8)">
      <rect width="12" height="18" fill="#fff" />
      <rect x="1" y="1" width="10" height="16" fill="#3f86cf" />
      <path d="M3 4l3 3 4 4-4 3z" fill="#4a3829" />
    </g>
  </>,
  <>
    <rect x="4" y="14" width="48" height="28" fill="#fafafa" />
    <path d="M4 14h48v2H4z" fill="#dedede" />
    <path d="M6 18h5M6 21h4M6 24h5M6 27h4M6 30h5M6 33h5M6 36h4M14 19h9M14 22h7M14 25h10M14 28h7M14 31h9M14 34h7M14 37h9M28 19h9M28 22h11M28 25h8M28 28h12M28 31h9M28 34h7M41 19h9M41 22h6M41 25h8" stroke="#a9aaad" strokeWidth="1" />
    <g transform="translate(36 36) scale(.38)">
      <g transform="translate(-7 -8)"><FinderArt /></g>
    </g>
  </>,
  <>
    <path d="M10 9l5 40q13 5 26 0l5-40z" fill="url(#gTrash)" opacity=".93" />
    <ellipse cx="28" cy="9" rx="18" ry="4" fill="#bfc4d2" stroke="#f3f4f6" strokeWidth="1.600" />
    <path d="M16 15l4 33M28 15v34M40 15l-4 33" stroke="#f6f7f8" strokeWidth="2" opacity=".35" />
  </>,
];

function Dock() {
  const running = [0, 3, 5, 22];
  return (
    <div className="flex h-[74px] w-[2164px] rounded-t-[10px] border-l border-[#9aa1b8] bg-gradient-to-b from-[#8a91a6] via-[#8e96b0] to-[#939bb8] px-[5px] pt-[6px] shadow-[0_0_90px_rgba(0,0,0,0.15),0_0_3px_rgba(0,0,0,0.3)]">
      <Grads />
      {dockIcons.map((icon, i) => (
        <div key={i} className="flex w-[56px] shrink-0 flex-col items-center">
          <Ico>{icon}</Ico>
          {running.includes(i) && <div className="mt-[2px] mr-[2px] size-[6px] rounded-full bg-[#14203a]" />}
          {i === 1 && <div className="mt-[2px] h-[6px] w-[52px] rounded-full border-2 border-[#14203a]" />}
        </div>
      ))}
      <div className="flex w-[24px] shrink-0 justify-center pt-[4px]">
        <div className="h-[54px] w-[2px] bg-[#6c758c]" />
      </div>
      {trayIcons.map((icon, i) => (
        <div key={i} className="w-[56px] shrink-0">
          <Ico>{icon}</Ico>
        </div>
      ))}
    </div>
  );
}

export default function App() {
  return (
    <div className="flex h-[1600px] w-[2560px] flex-col overflow-hidden bg-gradient-to-b from-[#9fa1a8] from-[1400px] via-[#40434d] via-[1527px] to-[#7f8ca8] font-['Inter','Liberation_Sans',sans-serif]">
      <MenuBar />
      <div className="flex h-[1482px] shrink-0 flex-col">
        <div className="flex h-[196px] shrink-0 flex-col rounded-t-[9px] border-t-3 border-[#7c7d83] bg-gradient-to-b from-black from-[72px] to-[#01040e] to-[80px]">
          <TabStrip />
          <Toolbar />
          <BookmarksBar />
        </div>
        <Page />
      </div>
      <div className="flex h-[74px] shrink-0 pl-[198px]">
        <Dock />
      </div>
    </div>
  );
}
